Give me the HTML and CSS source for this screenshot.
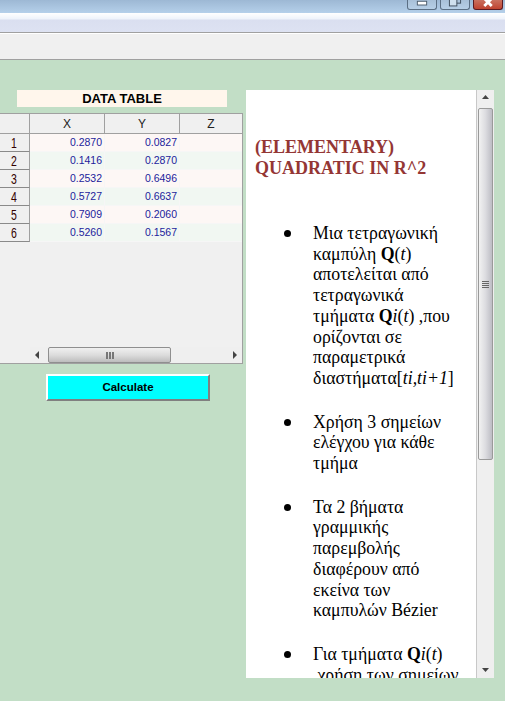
FILE: index.html
```html
<!DOCTYPE html>
<html lang="el">
<head>
<meta charset="utf-8">
<title>Data table</title>
<link rel="stylesheet" href="styles.css">
</head>
<body>
<header class="chrome">
  <div class="titlebar">
    <div class="win-btn"><svg width="30" height="10" viewBox="0 0 30 10"><rect x="10" y="1" width="10" height="4" fill="#fff" stroke="#4a5a6a"/></svg></div>
    <div class="win-btn"><svg width="30" height="10" viewBox="0 0 30 10"><rect x="14" y="-3" width="7" height="6" fill="none" stroke="#3c4c5c"/><rect x="9" y="-1" width="8" height="7" fill="#cfe0ee" stroke="#3c4c5c"/></svg></div>
    <div class="win-btn close"><svg width="30" height="10" viewBox="0 0 30 10"><path d="M11 -2 L19 6 M19 -2 L11 6" stroke="#fff" stroke-width="3"/></svg></div>
  </div>
  <div class="menubar"></div>
  <div class="toolbar"></div>
</header>
<main class="content">
  <section class="left">
    <h2 class="table-title">DATA TABLE</h2>
    <div class="grid">
      <div class="head-row">
        <div class="corner"></div>
        <div class="col-x">X</div>
        <div class="col-y">Y</div>
        <div class="col-z">Z</div>
      </div>
      <div class="row odd"><div class="rh"><span class="rn">1</span></div><div class="cell col-x">0.2870</div><div class="cell col-y">0.0827</div><div class="cell col-z"></div></div>
      <div class="row even"><div class="rh"><span class="rn">2</span></div><div class="cell col-x">0.1416</div><div class="cell col-y">0.2870</div><div class="cell col-z"></div></div>
      <div class="row odd"><div class="rh"><span class="rn">3</span></div><div class="cell col-x">0.2532</div><div class="cell col-y">0.6496</div><div class="cell col-z"></div></div>
      <div class="row even"><div class="rh"><span class="rn">4</span></div><div class="cell col-x">0.5727</div><div class="cell col-y">0.6637</div><div class="cell col-z"></div></div>
      <div class="row odd"><div class="rh"><span class="rn">5</span></div><div class="cell col-x">0.7909</div><div class="cell col-y">0.2060</div><div class="cell col-z"></div></div>
      <div class="row even"><div class="rh"><span class="rn">6</span></div><div class="cell col-x">0.5260</div><div class="cell col-y">0.1567</div><div class="cell col-z"></div></div>
      <div class="grid-fill"></div>
      <div class="hscroll">
        <svg class="arrow" width="16" height="16" viewBox="0 0 16 16"><path d="M5 8 L9 4 V12 Z" fill="#444"/></svg>
        <div class="hthumb"><span class="grip"></span><span class="grip"></span><span class="grip"></span></div>
        <div class="hspace"></div>
        <svg class="arrow" width="16" height="16" viewBox="0 0 16 16"><path d="M11 8 L7 4 V12 Z" fill="#444"/></svg>
      </div>
    </div>
    <button class="calc" type="button">Calculate</button>
  </section>
  <section class="panel">
    <article class="doc">
      <h1 class="doc-title">(ELEMENTARY) QUADRATIC IN R^2</h1>
      <ul class="doc-list">
        <li>Μια τετραγωνική καμπύλη <b>Q</b>(<i>t</i>) αποτελείται από τετραγωνικά τμήματα <b>Q</b><i>i</i>(<i>t</i>) ,που ορίζονται σε παραμετρικά διαστήματα[<i>ti,ti+1</i>]</li>
        <li>Χρήση 3 σημείων ελέγχου για κάθε τμήμα</li>
        <li>Τα 2 βήματα γραμμικής παρεμβολής διαφέρουν από εκείνα των καμπυλών Bézier</li>
        <li>Για τμήματα <b>Q</b><i>i</i>(<i>t</i>) <br>&nbsp;χρήση των σημείων ελέγχου</li>
      </ul>
    </article>
    <div class="vscroll">
      <svg class="varrow" width="17" height="16" viewBox="0 0 17 16"><path d="M8.500 5 L12 9 H5 Z" fill="#444"/></svg>
      <div class="vthumb"><span class="vgrip"></span><span class="vgrip"></span><span class="vgrip"></span><span class="vgrip"></span></div>
      <div class="vspace"></div>
      <svg class="varrow" width="17" height="16" viewBox="0 0 17 16"><path d="M8.500 10 L12 6 H5 Z" fill="#444"/></svg>
    </div>
  </section>
</main>
</body>
</html>
```
FILE: styles.css
```css
* { box-sizing: border-box; }
html, body { margin: 0; padding: 0; }
body {
  width: 505px;
  height: 701px;
  overflow: hidden;
  background: #c2dec6;
  font-family: "Liberation Sans", Arial, sans-serif;
}
.chrome { display: flex; flex-direction: column; height: 60px; }
.titlebar {
  height: 13px;
  display: flex;
  justify-content: flex-end;
  gap: 3px;
  padding-right: 2px;
  background: linear-gradient(#9db8d4, #b5d0ea);
}
.win-btn {
  width: 30px;
  height: 10px;
  border: 1px solid #5b6f84;
  border-top: 0;
  border-radius: 0 0 3px 3px;
  background: linear-gradient(#a8c0d8, #b6cfe6);
  overflow: hidden;
  display: flex;
}
.win-btn.close {
  border-color: #5c1a20;
  background: linear-gradient(#c9705f, #c0422f);
}
.menubar {
  height: 19px;
  background: linear-gradient(#fff 0, #eef3fb 6px, #dadff0 7px, #dde2f2 100%);
}
.toolbar {
  height: 28px;
  background: #f0f0f0;
  border-top: 1px solid #a0a0a0;
  border-bottom: 1px solid #a0a0a0;
  box-shadow: inset 0 1px 0 #fff;
}
.content {
  display: flex;
  align-items: flex-start;
  padding-top: 30px;
  gap: 3px;
}
.left { width: 243px; display: flex; flex-direction: column; }
.table-title {
  margin: 0 0 6px 17px;
  width: 210px;
  height: 17px;
  background: #fff6ec;
  color: #000;
  font: bold 13px/17px "Liberation Sans", Arial, sans-serif;
  text-align: center;
}
.grid {
  width: 243px;
  height: 251px;
  background: #f0f0f0;
  border: 1px solid #a0a0a0;
  border-left: 0;
  display: flex;
  flex-direction: column;
}
.head-row {
  display: flex;
  height: 20px;
  background: #f0f0f0;
  border-bottom: 1px solid #a0a0a0;
  font-size: 12px;
  line-height: 21px;
  color: #222;
  text-align: center;
}
.corner { width: 30px; border-right: 1px solid #a0a0a0; }
.col-x, .col-y { width: 75px; border-right: 1px solid #a0a0a0; }
.col-z { flex: 1; }
.row { display: flex; height: 18px; font-size: 10.500px; line-height: 16px; color: #1c1c9c; }
.row.odd .cell { background: #fdf7f5; }
.row.even .cell { background: #f1f7f2; }
.rh {
  width: 30px;
  background: #f0f0f0;
  border-right: 1px solid #a0a0a0;
  border-bottom: 1px solid #8a8a8a;
  text-align: center;
  padding-right: 2px;
}
.rn {
  display: inline-block;
  color: #300;
  font: 14px/19px "Liberation Sans", sans-serif;
  transform: scaleX(0.75);
}
.cell {
  padding-right: 2px;
  text-align: right;
  border-right: 1px solid #f6f6f6;
  border-bottom: 1px solid #f6f6f6;
}
.cell.col-z { border-right: 0; }
.grid-fill { flex: 1; }
.hscroll {
  margin-left: 30px;
  height: 16px;
  display: flex;
  align-items: stretch;
  background: #efefef;
}
.arrow { flex: none; }
.hthumb {
  width: 123px;
  margin-left: 2px;
  border: 1px solid #8f8f8f;
  border-radius: 2px;
  background: linear-gradient(#f0f0f0, #dcdcdc 50%, #bdbdbd);
  display: flex;
  justify-content: center;
  align-items: center;
  gap: 1px;
}
.grip { width: 2px; height: 7px; background: #777; }
.hspace { flex: 1; }
.calc {
  margin: 10px 0 0 46px;
  width: 164px;
  height: 27px;
  padding: 0;
  background: #0ff;
  border: 2px solid;
  border-color: #fff #808080 #808080 #fff;
  color: #000;
  font: bold 11.500px/21px "Liberation Sans", Arial, sans-serif;
  text-align: center;
}
.panel {
  width: 248px;
  height: 588px;
  display: flex;
  background: #fff;
  overflow: hidden;
}
.doc {
  flex: 1;
  min-width: 0;
  height: 588px;
  overflow: hidden;
  padding: 47px 0 0 9px;
  font-family: "Liberation Serif", "Times New Roman", serif;
  font-size: 17.800px;
  line-height: 20.700px;
  color: #000;
}
.doc-title {
  margin: 0;
  font-size: 18px;
  line-height: 21px;
  font-weight: bold;
  color: #943634;
}
.doc-list {
  margin: 44px 0 0;
  padding: 0 16px 0 58px;
  list-style: none;
}
.doc-list li { position: relative; margin: 0 0 23px; }
.doc-list li::before {
  content: "";
  position: absolute;
  left: -29px;
  top: 7px;
  width: 7px;
  height: 7px;
  border-radius: 50%;
  background: #000;
}
.vscroll {
  width: 18px;
  flex: none;
  display: flex;
  flex-direction: column;
  background: #efefef;
  border-left: 1px solid #c8c8c8;
}
.varrow { flex: none; height: 16px; }
.vthumb {
  height: 352px;
  margin: 2px 1px 0;
  border: 1px solid #9a9a9a;
  border-radius: 2px;
  background: linear-gradient(90deg, #f2f2f2, #dcdce0 50%, #bdbdc4);
  display: flex;
  flex-direction: column;
  justify-content: center;
  align-items: center;
  gap: 1px;
}
.vgrip { width: 7px; height: 1px; background: #666; }
.vspace { flex: 1; }
```
